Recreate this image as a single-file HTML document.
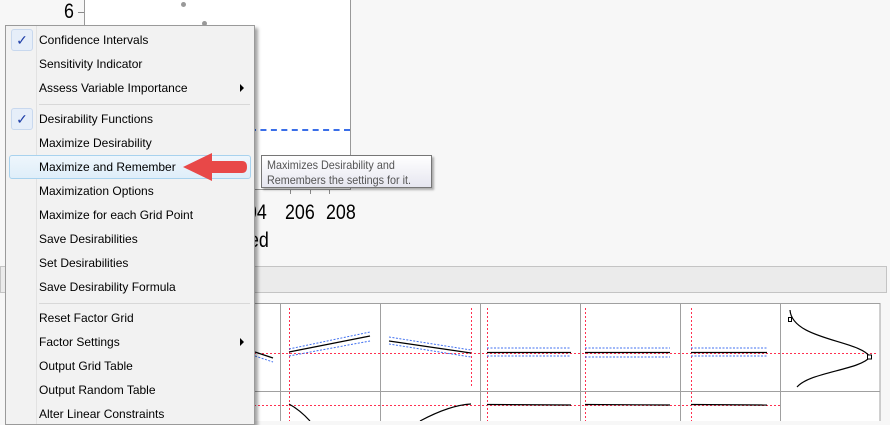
<!DOCTYPE html>
<html><head><meta charset="utf-8"><style>
*{margin:0;padding:0;box-sizing:border-box}
body{width:890px;height:421px;overflow:hidden;background:#f7f7f7;font-family:"Liberation Sans",sans-serif;position:relative}
.abs{position:absolute}
.menu{left:5px;top:25px;width:250px;height:400px;background:#f2f2f2;border:1px solid #9a9a9a;box-shadow:3px 3px 3px rgba(0,0,0,.35)}
.menu .col{position:absolute;left:30px;top:0;bottom:0;width:1px;background:#e2e2e2}
.it{position:absolute;left:33px;font-size:12px;color:#000;height:22px;line-height:22px;white-space:nowrap}
.chk{position:absolute;left:5px;width:22px;height:22px;border:1px solid #c8d8ee;border-radius:3px;background:#e6eef9;color:#1f3fa8;font-size:14px;text-align:center;line-height:20px}
.sep{position:absolute;left:33px;right:4px;height:1px;background:#d8d8d8}
.arr{position:absolute;right:10px;width:0;height:0;border-left:4px solid #000;border-top:4px solid transparent;border-bottom:4px solid transparent}
.hl{position:absolute;left:3px;right:3px;height:24px;border:1px solid #a8d2ee;border-radius:3px;background:linear-gradient(#eef6fc,#dfeef9)}
.tip{left:261px;top:155px;width:171px;height:33px;border:1px solid #767676;background:linear-gradient(#fff,#e6e6f0);box-shadow:2px 2px 2px rgba(0,0,0,.3)}
.tip div{position:absolute;left:5px;font-size:12px;color:#555;line-height:15px;white-space:nowrap;transform:scaleX(0.9);transform-origin:left top}
.num{position:absolute;font-size:21px;transform:scaleX(0.85);transform-origin:left top}
</style></head><body>
<div class="abs" style="left:84px;top:0;width:267px;height:190px;background:#fff;border-left:1px solid #999;border-right:1px solid #999;border-bottom:1px solid #999"></div>
<div class="num" style="left:64px;top:0px">6</div>
<div class="abs" style="left:78px;top:12px;width:6px;height:1px;background:#888"></div>
<div class="abs" style="left:181px;top:2px;width:5px;height:5px;border-radius:50%;background:#999"></div>
<div class="abs" style="left:202px;top:21px;width:5px;height:5px;border-radius:50%;background:#999"></div>
<div class="abs" style="left:250px;top:129px;width:100px;border-top:2px dashed #3a6ee8"></div>
<div class="abs" style="left:290px;top:190px;width:1px;height:4px;background:#888"></div>
<div class="abs" style="left:310px;top:190px;width:1px;height:4px;background:#888"></div>
<div class="abs" style="left:329px;top:190px;width:1px;height:4px;background:#888"></div>
<div class="num" style="left:237px;top:201px">204</div>
<div class="num" style="left:285px;top:201px">206</div>
<div class="num" style="left:326px;top:201px">208</div>
<div class="num" style="left:244px;top:229px">ted</div>
<div class="abs" style="left:0;top:266px;width:887px;height:27px;background:#ebebeb;border:1px solid #c4c4c4"></div>
<svg class="abs" style="left:0;top:0" width="890" height="421">
<g stroke="#a0a0a0" fill="#fff"><rect x="250" y="303.5" width="630" height="120"/></g>
<g stroke="#a0a0a0"><line x1="250" y1="391.5" x2="880" y2="391.5"/>
<line x1="280.5" y1="303" x2="280.5" y2="421"/><line x1="380.5" y1="303" x2="380.5" y2="421"/><line x1="480.5" y1="303" x2="480.5" y2="421"/><line x1="580.5" y1="303" x2="580.5" y2="421"/><line x1="680.5" y1="303" x2="680.5" y2="421"/><line x1="780.5" y1="303" x2="780.5" y2="421"/></g>
<g stroke="#ff3050" stroke-dasharray="2,2" stroke-width="1" shape-rendering="crispEdges">
<line x1="250" y1="353.5" x2="877" y2="353.5"/><line x1="250" y1="405.5" x2="780" y2="405.5"/>
<line x1="289.5" y1="308" x2="289.5" y2="421"/><line x1="471.5" y1="308" x2="471.5" y2="388"/><line x1="487.5" y1="308" x2="487.5" y2="421"/><line x1="585.5" y1="308" x2="585.5" y2="421"/><line x1="691.5" y1="308" x2="691.5" y2="421"/></g>
<g stroke="#4070f0" stroke-dasharray="2,1.5" fill="none">
<line x1="289" y1="349" x2="370" y2="332"/><line x1="289" y1="356" x2="370" y2="341"/>
<line x1="389" y1="337" x2="471" y2="350"/><line x1="389" y1="344" x2="471" y2="357"/>
<line x1="487" y1="348" x2="571" y2="348"/><line x1="487" y1="356" x2="571" y2="356"/>
<line x1="585" y1="348" x2="670" y2="348"/><line x1="585" y1="357" x2="670" y2="357"/>
<line x1="691" y1="348" x2="767" y2="348"/><line x1="691" y1="356" x2="767" y2="356"/>
<line x1="255" y1="356" x2="273" y2="362"/></g>
<g stroke="#000" fill="none" stroke-width="1.2">
<line x1="289" y1="352" x2="370" y2="336"/><line x1="389" y1="341" x2="471" y2="353"/>
<line x1="487" y1="352.5" x2="571" y2="352.5"/><line x1="585" y1="352.5" x2="670" y2="352.5"/><line x1="691" y1="352.5" x2="767" y2="352.5"/>
<line x1="255" y1="352" x2="273" y2="358"/>
<path d="M790 310 C792 340 860 340 870 357 C860 370 810 372 797 387"/>
<path d="M289 404 Q300 410 310 421"/><path d="M420 421 Q450 405 471 404"/>
<line x1="487" y1="404.5" x2="571" y2="405"/><line x1="585" y1="404.5" x2="670" y2="405"/><line x1="691" y1="404.5" x2="767" y2="405"/>
</g>
<rect x="788.5" y="317.5" width="3" height="4" fill="#fff" stroke="#000"/>
<rect x="867.5" y="355" width="4" height="4" fill="#fff" stroke="#000"/>
</svg>
<div class="abs menu">
<div class="col"></div>
<div class="chk" style="top:3px">✓</div>
<div class="it" style="top:3px">Confidence Intervals</div>
<div class="it" style="top:27px">Sensitivity Indicator</div>
<div class="it" style="top:51px">Assess Variable Importance</div><div class="arr" style="top:58px"></div>
<div class="sep" style="top:78px"></div>
<div class="chk" style="top:82px">✓</div>
<div class="it" style="top:82px">Desirability Functions</div>
<div class="it" style="top:106px">Maximize Desirability</div>
<div class="hl" style="top:129px"></div>
<div class="it" style="top:130px">Maximize and Remember</div>
<div class="it" style="top:154px">Maximization Options</div>
<div class="it" style="top:178px">Maximize for each Grid Point</div>
<div class="it" style="top:202px">Save Desirabilities</div>
<div class="it" style="top:226px">Set Desirabilities</div>
<div class="it" style="top:250px">Save Desirability Formula</div>
<div class="sep" style="top:277px"></div>
<div class="it" style="top:281px">Reset Factor Grid</div>
<div class="it" style="top:305px">Factor Settings</div><div class="arr" style="top:312px"></div>
<div class="it" style="top:329px">Output Grid Table</div>
<div class="it" style="top:353px">Output Random Table</div>
<div class="it" style="top:377px">Alter Linear Constraints</div>
</div>
<svg class="abs" style="left:180px;top:150px" width="70" height="34"><path d="M3 17 L32 3 L32 11 L62 11 Q67 11 67 17 Q67 23 62 23 L32 23 L32 31 Z" fill="#e84848"/></svg>
<div class="abs tip"><div style="top:2px">Maximizes Desirability and</div><div style="top:17px">Remembers the settings for it.</div></div>
</body></html>
